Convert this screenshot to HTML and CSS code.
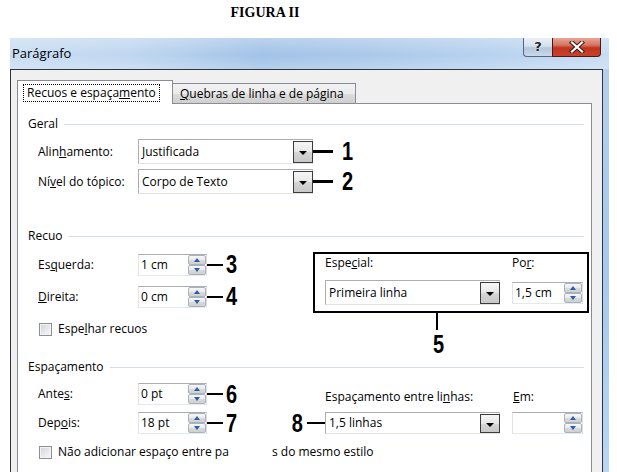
FILE: index.html
```html
<!DOCTYPE html>
<html lang="pt">
<head>
<meta charset="utf-8">
<title>Parágrafo</title>
<link rel="stylesheet" href="styles.css">
</head>
<body>
<div class="page">
  <h1 class="fig-title">FIGURA II</h1>
  <div class="window">
    <div class="titlebar">
      <span class="title">Parágrafo</span>
      <div class="caption-btns">
        <div class="cbtn help">?</div>
        <div class="cbtn close">
          <svg width="16" height="12" viewBox="0 0 16 12"><path d="M3 1.5 L13 10.5 M13 1.5 L3 10.5" stroke="#3a1a14" stroke-width="4.2" stroke-linecap="square"/><path d="M3 1.5 L13 10.5 M13 1.5 L3 10.5" stroke="#fff" stroke-width="2.2" stroke-linecap="square"/></svg>
        </div>
      </div>
    </div>
    <div class="frame-row">
      <div class="client">
        <div class="tabs">
          <div class="tab active"><span class="focus">Recuos e espaça<u>m</u>ento</span></div>
          <div class="tab"><u>Q</u>uebras de linha e de página</div>
        </div>
        <div class="panel">
          <div class="section-head"><span>Geral</span><i class="rule"></i></div>
          <div class="row first">
            <span class="lbl">Alin<u>h</u>amento:</span>
            <div class="combo w175 h25"><span class="val">Justificada</span><span class="drop"><i class="tri"></i></span></div>
            <i class="lead lead-g"></i><span class="num n-g">1</span>
          </div>
          <div class="row second">
            <span class="lbl">Ní<u>v</u>el do tópico:</span>
            <div class="combo w175 h25"><span class="val">Corpo de Texto</span><span class="drop"><i class="tri"></i></span></div>
            <i class="lead lead-g"></i><span class="num n-g">2</span>
          </div>

          <div class="section-head recuo-head"><span>Recuo</span><i class="rule"></i></div>
          <div class="recuo-body">
            <div class="left-col">
              <div class="row">
                <span class="lbl">Es<u>q</u>uerda:</span>
                <div class="spin w69"><span class="val">1 cm</span><span class="arrows"><b class="up"><i></i></b><b class="down"><i></i></b></span></div>
                <i class="lead lead-s"></i><span class="num n-s">3</span>
              </div>
              <div class="row second-s">
                <span class="lbl"><u>D</u>ireita:</span>
                <div class="spin w69"><span class="val">0 cm</span><span class="arrows"><b class="up"><i></i></b><b class="down"><i></i></b></span></div>
                <i class="lead lead-s"></i><span class="num n-s">4</span>
              </div>
              <div class="check-row mirror">
                <span class="chk"></span><span>Espe<u>l</u>har recuos</span>
              </div>
            </div>
            <div class="right-col">
              <div class="special">
                <span>Espe<u>c</u>ial:</span>
                <span>Po<u>r</u>:</span>
                <div class="combo w175 h25"><span class="val">Primeira linha</span><span class="drop"><i class="tri"></i></span></div>
                <div class="spin w71"><span class="val">1,5 cm</span><span class="arrows"><b class="up"><i></i></b><b class="down"><i></i></b></span></div>
              </div>
              <i class="vlead"></i>
              <span class="num n-five">5</span>
            </div>
          </div>

          <div class="section-head esp-head"><span>Espaçamento</span><i class="rule"></i></div>
          <div class="esp-grid">
            <div class="row">
              <span class="lbl">Ante<u>s</u>:</span>
              <div class="spin w69"><span class="val">0 pt</span><span class="arrows"><b class="up"><i></i></b><b class="down"><i></i></b></span></div>
              <i class="lead lead-s"></i><span class="num n-s">6</span>
            </div>
            <span class="empty"></span>
            <span class="lbl-top">Espaçamento entre li<u>n</u>has:</span>
            <span class="lbl-top em"><u>E</u>m:</span>

            <div class="row">
              <span class="lbl">Dep<u>o</u>is:</span>
              <div class="spin w69"><span class="val">18 pt</span><span class="arrows"><b class="up"><i></i></b><b class="down"><i></i></b></span></div>
              <i class="lead lead-s"></i><span class="num n-s">7</span>
            </div>
            <div class="annot8"><span class="num n-eight">8</span><i class="lead lead-8"></i></div>
            <div class="combo w175 h22"><span class="val">1,5 linhas</span><span class="drop"><i class="tri"></i></span></div>
            <div class="spin w71 em-spin"><span class="val"></span><span class="arrows"><b class="up"><i></i></b><b class="down"><i></i></b></span></div>
          </div>

          <div class="check-row last">
            <span class="chk"></span><span class="part1">Não adicionar espaço entre pa</span><span class="part2">s do mesmo estilo</span>
          </div>
        </div>
      </div>
      <div class="rframe"></div>
    </div>
  </div>
</div>
</body>
</html>
```
FILE: styles.css
```css
* { box-sizing: border-box; }

html, body {
  margin: 0;
  padding: 0;
  background: #fff;
}

body {
  width: 617px;
  height: 472px;
  overflow: hidden;
  font-family: "Open Sans", "Noto Sans", sans-serif;
  font-size: 12px;
  line-height: 16px;
  color: #000;
}

u { text-decoration: underline; text-underline-offset: 1px; }

.fig-title {
  margin: 0;
  width: 530px;
  height: 38px;
  padding-top: 4px;
  font-family: "Liberation Serif", "Times New Roman", serif;
  font-weight: bold;
  font-size: 14px;
  line-height: 18px;
  text-align: center;
}

.window {
  margin-left: 10px;
  width: 599px;
  height: 434px;
  display: flex;
  flex-direction: column;
}

.titlebar {
  height: 31px;
  display: flex;
  justify-content: space-between;
  align-items: flex-start;
  background:
    linear-gradient(180deg, rgba(255,255,255,0.30) 0%, rgba(255,255,255,0.05) 55%, rgba(255,255,255,0.25) 100%),
    linear-gradient(90deg, #c6dbf2 0%, #bcd4ef 20%, #9dbfe6 42%, #a6c5e9 60%, #b3cfee 80%, #c4daf2 100%);
}

.title {
  font-size: 13px;
  line-height: 31px;
  padding-left: 2px;
  color: #000;
}

.caption-btns {
  display: flex;
  margin-right: 8px;
}

.cbtn {
  height: 19px;
  display: flex;
  align-items: center;
  justify-content: center;
}

.help {
  width: 29px;
  border: 1px solid #56667c;
  border-top: none;
  border-right: none;
  border-radius: 0 0 0 4px;
  background: linear-gradient(180deg, #e9f0f8 0%, #d3e0ee 45%, #b4c6dc 55%, #c9d8ea 100%);
  font-family: "DejaVu Sans", sans-serif;
  font-weight: bold;
  font-size: 13px;
  color: #222;
  text-shadow: 0 0 2px #fff, 0 0 1px #fff;
}

.close {
  width: 49px;
  border: 1px solid #4a1a12;
  border-top: none;
  border-radius: 0 0 4px 0;
  background: linear-gradient(180deg, #e9a796 0%, #d6735f 40%, #c0341f 55%, #c8432c 100%);
}

.frame-row {
  flex: 1;
  display: flex;
}

.client {
  width: 593px;
  border: 1px solid #2c3540;
  border-bottom: none;
  background: #f0f0f0;
  padding: 10px 10px 0 6px;
  display: flex;
  flex-direction: column;
}

.rframe {
  width: 6px;
  background: linear-gradient(180deg, #b4cfec 0%, #a7c9ee 50%, #b9d6f3 100%);
}

.tabs {
  height: 23px;
  display: flex;
  align-items: flex-end;
}

.tab {
  height: 20px;
  width: 184px;
  margin-left: -1px;
  border: 1px solid #898c95;
  border-bottom: none;
  background: linear-gradient(180deg, #f2f2f2 0%, #ebebeb 50%, #dddddd 51%, #cfcfcf 100%);
  padding-left: 7px;
  line-height: 19px;
  white-space: nowrap;
}

.tab.active {
  margin-left: 0;
  width: 156px;
  height: 24px;
  margin-bottom: -1px;
  position: relative;
  z-index: 1;
  background: #fff;
  padding: 2px 0 0 5px;
}

.focus {
  display: inline-block;
  border: 1px dotted #000;
  padding: 0 3px;
  line-height: 16px;
  height: 18px;
}

.panel {
  flex: 1;
  background: #fff;
  border: 1px solid #898c95;
  border-bottom: none;
  padding: 12px 7px 0 10px;
}

.section-head {
  height: 16px;
  display: flex;
  align-items: center;
}

.rule {
  flex: 1;
  height: 1px;
  margin-left: 6px;
  background: #d5dfe5;
}

.recuo-head { margin-top: 34px; }
.esp-head { margin-top: 2px; }

.row {
  display: flex;
  align-items: center;
  padding-left: 10px;
}

.row.first { margin-top: 7px; }
.row.second { margin-top: 5px; }
.row.second-s { margin-top: 7px; }

.lbl { width: 100px; flex: none; }

.combo {
  display: flex;
  align-items: stretch;
  border: 1px solid #abadb3;
  border-right-color: #c9ccd3;
  border-bottom-color: #dfe3ea;
  background: #fff;
  flex: none;
}

.w175 { width: 175px; }
.h25 { height: 25px; }
.h22 { height: 22px; }

.combo .val {
  flex: 1;
  padding-left: 3px;
  display: flex;
  align-items: center;
}

.drop {
  width: 20px;
  margin: 1px -1px 0 0;
  border: 1px solid #3b3b3b;
  background: linear-gradient(180deg, #f6f6f6 0%, #e6e6e6 50%, #d5d5d5 51%, #c8c8c8 100%);
  display: flex;
  align-items: center;
  justify-content: center;
  padding-top: 2px;
}

.tri {
  width: 0;
  height: 0;
  border-left: 4px solid transparent;
  border-right: 4px solid transparent;
  border-top: 4px solid #000;
}

.spin {
  height: 22px;
  display: flex;
  border: 1px solid #abadb3;
  border-right-color: #dbdfe6;
  border-bottom-color: #e3e9ef;
  border-left-color: #e2e3ea;
  background: #fff;
  flex: none;
}

.w69 { width: 69px; }
.w71 { width: 71px; }

.spin .val {
  flex: 1;
  padding-left: 2px;
  display: flex;
  align-items: center;
}

.arrows {
  width: 18px;
  display: flex;
  flex-direction: column;
}

.arrows b {
  flex: 1;
  border: 1px solid #a9b2bd;
  border-radius: 2px;
  background: linear-gradient(180deg, #f7f7f7 0%, #e9e9e9 50%, #dadada 51%, #d0d0d0 100%);
  display: flex;
  align-items: center;
  justify-content: center;
}

.arrows .up i {
  width: 0;
  height: 0;
  border-left: 3.5px solid transparent;
  border-right: 3.5px solid transparent;
  border-bottom: 4px solid #2f5ca6;
}

.arrows .down i {
  width: 0;
  height: 0;
  border-left: 3.5px solid transparent;
  border-right: 3.5px solid transparent;
  border-top: 4px solid #2f5ca6;
}

.lead {
  display: block;
  height: 2px;
  background: #000;
  flex: none;
}

.lead-g { width: 20px; height: 3px; }
.lead-s { width: 16px; }
.lead-8 { width: 18px; margin-left: 4px; }

.num {
  display: inline-block;
  font-family: "Liberation Sans Narrow", "Liberation Sans", "Arial Narrow", sans-serif;
  font-weight: bold;
  font-size: 25px;
  line-height: 25px;
  color: #000;
  transform: scaleX(0.8);
  transform-origin: left center;
}

.n-g { margin-left: 9px; }
.n-s { margin-left: 3px; }
.n-eight { transform-origin: right center; }

.recuo-body {
  display: flex;
  margin-top: 8px;
}

.left-col { width: 285px; flex: none; }

.right-col {
  width: 276px;
  display: flex;
  flex-direction: column;
  align-items: flex-start;
}

.special {
  width: 276px;
  height: 61px;
  border: 2px solid #000;
  padding: 1px 4px 0 10px;
  display: grid;
  grid-template-columns: 175px 71px;
  grid-template-rows: 16px 25px;
  column-gap: 12px;
  row-gap: 9px;
  align-items: center;
}

.special .spin { height: 22px; }

.vlead {
  display: block;
  width: 2px;
  height: 17px;
  margin-left: 123px;
  background: #000;
}

.n-five {
  margin-left: 120px;
  margin-top: 2px;
  display: block;
}

.check-row {
  display: flex;
  align-items: center;
  height: 16px;
  padding-left: 11px;
}

.check-row.mirror { margin-top: 12px; }
.check-row.last { margin-top: 10px; }

.chk {
  width: 13px;
  height: 13px;
  margin-right: 6px;
  border: 1px solid #8e8f8f;
  background: linear-gradient(135deg, #cfd2d6 0%, #e8e9eb 55%, #f8f8f8 100%);
  box-shadow: inset 0 0 0 1px #f4f4f4;
  flex: none;
}

.part1 {
  display: inline-block;
  width: 214px;
  white-space: nowrap;
}

.part2 { white-space: nowrap; }

.esp-grid {
  display: grid;
  grid-template-columns: 260px 37px 175px 83px;
  grid-template-rows: 22px 22px;
  row-gap: 7px;
  margin-top: 8px;
  align-items: center;
}

.lbl-top { align-self: end; }
.lbl-top.em { padding-left: 13px; }

.annot8 {
  display: flex;
  align-items: center;
  justify-content: flex-end;
}

.em-spin { margin-left: 12px; }
```
